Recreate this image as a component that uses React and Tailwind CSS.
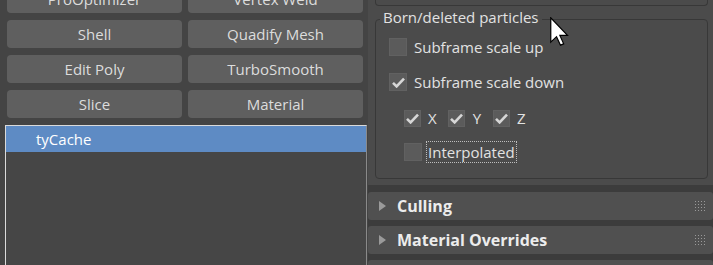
import React from "react";

const buttons = [
  "ProOptimizer",
  "Vertex Weld",
  "Shell",
  "Quadify Mesh",
  "Edit Poly",
  "TurboSmooth",
  "Slice",
  "Material",
];

const Check = ({ checked, size = "w-[18px] h-[18px]" }) => (
  <div className={`${size} shrink-0 bg-[#5b5b5b] border border-[#616161] flex items-center justify-center`}>
    {checked && (
      <svg width="13" height="11" viewBox="0 0 13 11">
        <path d="M1 5.8 L4.6 9.4 L12 1.6" fill="none" stroke="#d6d6d6" strokeWidth="2.6" />
      </svg>
    )}
  </div>
);

const Grip = () => (
  <div className="grid grid-cols-4 gap-[2px] w-[10px]">
    {[...Array(16)].map((_, i) => (
      <div key={i} className="w-[1px] h-[1px] bg-[#9a9a9a]" />
    ))}
  </div>
);

const Rollout = ({ title, className = "" }) => (
  <div className={`h-[28px] shrink-0 rounded-[3px] bg-[#505050] flex items-center pl-[11px] pr-[8px] ${className}`}>
    <svg width="7" height="10" viewBox="0 0 7 10" className="shrink-0">
      <path d="M0 0 L7 5 L0 10 Z" fill="#9a9a9a" />
    </svg>
    <span className="ml-[11px] font-bold text-[16px] text-[#ececec] flex-1">{title}</span>
    <Grip />
  </div>
);

export default function App() {
  return (
    <div className="relative w-[713px] h-[265px] overflow-hidden flex bg-[#3c3c3c] font-['Open_Sans',sans-serif] text-[15px] leading-none">
      <div className="w-[368px] shrink-0 bg-[#444444] flex flex-col">
        <div className="grid grid-cols-2 gap-x-[6px] gap-y-[7px] pl-[7px] pr-[5px] -mt-[15px]">
          {buttons.map((b) => (
            <div key={b} className="h-[28px] pt-[1px] rounded-[4px] bg-[#5f5f5f] text-[#dcdcdc] flex items-center justify-center">
              {b}
            </div>
          ))}
        </div>
        <div className="mt-[7px] ml-[5px] w-[362px] flex-1 border-l border-t border-r border-l-[#dadada] border-t-[#dadada] border-r-[#8a8a8a] bg-[#464646]">
          <div className="h-[26px] bg-[#5e8bc4] pl-[30px] text-white flex items-center">tyCache</div>
        </div>
      </div>

      <div className="w-[345px] shrink-0 flex flex-col">
        <div className="h-[185px] shrink-0 bg-[#4b4b4b] pl-[7px] pr-[5px] flex flex-col">
          <div className="h-[6px] border border-t-0 border-[#383838] rounded-b-[4px]" />
          <div className="relative mt-[13px] h-[160px] border border-[#383838] rounded-[4px] flex flex-col pl-[13px]">
            <span className="absolute left-[4px] -top-[10px] bg-[#4b4b4b] px-[3px] text-[#e2e2e2]">
              Born/deleted particles
            </span>
            <div className="mt-[18px] flex items-center gap-[7px] text-[#e2e2e2]">
              <Check />
              <span>Subframe scale up</span>
            </div>
            <div className="mt-[17px] flex items-center gap-[7px] text-[#e2e2e2]">
              <Check checked />
              <span>Subframe scale down</span>
            </div>
            <div className="mt-[19px] ml-[15px] flex items-center text-[#e2e2e2]">
              <Check checked size="w-[17px] h-[17px]" />
              <span className="ml-[7px]">X</span>
              <div className="ml-[11px]">
                <Check checked size="w-[17px] h-[17px]" />
              </div>
              <span className="ml-[8px]">Y</span>
              <div className="ml-[12px]">
                <Check checked size="w-[17px] h-[17px]" />
              </div>
              <span className="ml-[7px]">Z</span>
            </div>
            <div className="mt-[14px] ml-[15px] flex items-center text-[#e2e2e2]">
              <Check />
              <span className="ml-[4px] h-[22px] px-[1px] flex items-center border border-dotted border-[#bdbdbd]">
                Interpolated
              </span>
            </div>
          </div>
        </div>
        <Rollout title="Culling" className="mt-[7px]" />
        <Rollout title="Material Overrides" className="mt-[6px]" />
        <Rollout title="" className="mt-[6px]" />
      </div>

      <svg
        className="absolute left-[550px] top-[17px]"
        width="19"
        height="29"
        viewBox="0 0 12.5 19"
      >
        <path
          d="M0.5 0.5 L0.5 16.5 L4.3 12.9 L6.9 18.5 L9 17.6 L6.5 12.1 L11.5 12.1 Z"
          fill="#ffffff"
          stroke="#000000"
          strokeWidth="0.8"
          strokeLinejoin="miter"
        />
      </svg>
    </div>
  );
}
